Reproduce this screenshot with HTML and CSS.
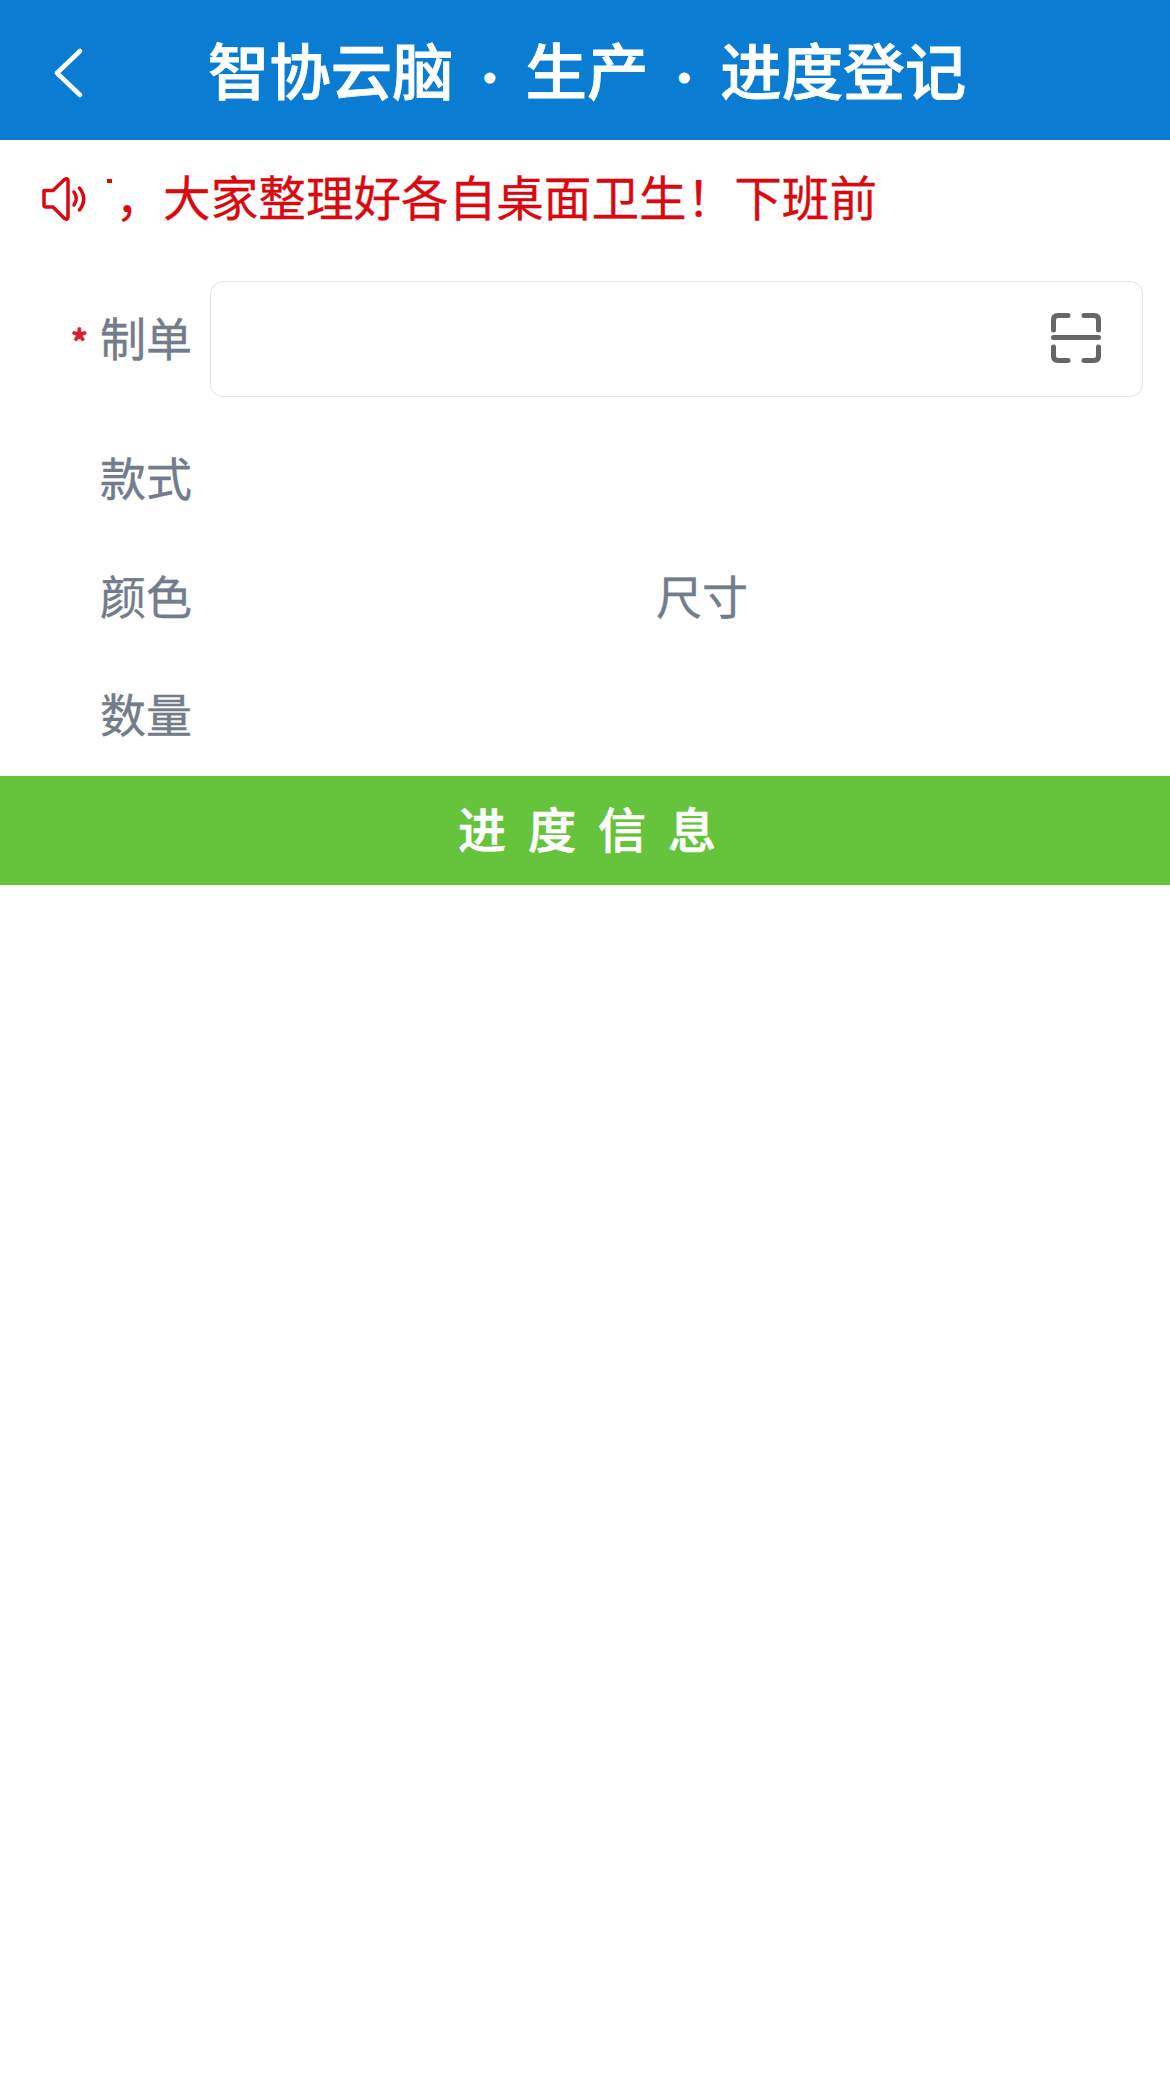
FILE: index.html
```html
<!DOCTYPE html>
<html lang="zh-CN">
<head>
<meta charset="utf-8">
<title>智协云脑 · 生产 · 进度登记</title>
<link rel="stylesheet" href="styles.css">
</head>
<body>
<header class="topbar">
  <a class="back" aria-label="返回">
    <svg class="back-icon" viewBox="0 0 30 50"><path d="M26 3 L3 25 L26 47"/></svg>
  </a>
  <h1 class="title">智协云脑 <span class="dot">·</span> 生产 <span class="dot">·</span> 进度登记</h1>
  <span class="topbar-side"></span>
</header>
<section class="notice">
  <svg class="notice-icon" viewBox="0 0 46 44">
    <path d="M3 13.5 H12 L23.5 2.5 Q27 0.5 27 4 V40 Q27 43.5 23.5 41.5 L12 30 H5 Q3 30 3 28 Z"/>
    <path d="M33 15 Q37.5 21.5 33 28"/>
    <path d="M38.5 11 Q47 22 38.5 33"/>
  </svg>
  <div class="notice-track">
    <i class="notice-cut"></i>
    <span class="notice-text">，大家整理好各自桌面卫生！下班前</span>
  </div>
</section>
<main class="form">
  <div class="row row-input">
    <label class="label"><span class="required">*</span>制单</label>
    <div class="input">
      <svg class="scan-icon" viewBox="0 0 50 50">
        <path d="M2.5 17 V7 Q2.5 2.5 7 2.5 H17"/>
        <path d="M33 2.5 H43 Q47.5 2.5 47.5 7 V17"/>
        <path d="M2.5 34 V43 Q2.5 47.5 7 47.5 H17"/>
        <path d="M33 47.5 H43 Q47.5 47.5 47.5 43 V34"/>
        <path d="M2.5 24.5 H47.5"/>
      </svg>
    </div>
  </div>
  <div class="row"><span class="label">款式</span></div>
  <div class="row row-split">
    <span class="label">颜色</span>
    <span class="label">尺寸</span>
  </div>
  <div class="row"><span class="label">数量</span></div>
</main>
<div class="section-bar">进度信息</div>
</body>
</html>
```
FILE: styles.css
```css
* { box-sizing: border-box; }
html, body { margin: 0; padding: 0; background: #fff; }
body {
  width: 1170px;
  height: 2080px;
  overflow: hidden;
  font-family: "Noto Sans CJK SC", "Noto Sans", sans-serif;
}
.topbar {
  height: 140px;
  background: #0a7dd3;
  display: grid;
  grid-template-columns: 1fr auto 1fr;
  align-items: center;
  color: #fff;
}
.back { display: flex; padding: 6px 0 0 54px; }
.back-icon {
  width: 30px;
  height: 50px;
  fill: none;
  stroke: #fff;
  stroke-width: 4.5;
  stroke-linecap: round;
  stroke-linejoin: round;
}
.title {
  margin: 0 0 0 4px;
  padding-bottom: 3px;
  font-size: 61.5px;
  line-height: 1;
  font-weight: 500;
  -webkit-text-stroke: 0.8px #fff;
  white-space: pre;
}
.dot {
  font-size: 44px;
  font-weight: 500;
}
.notice {
  height: 120px;
  display: flex;
  align-items: flex-start;
  padding: 26px 0 0 41px;
  color: #d9090f;
}
.notice-icon {
  width: 46px;
  height: 44px;
  flex: none;
  margin-top: 11px;
  fill: none;
  stroke: #d9090f;
  stroke-width: 3.5;
  stroke-linecap: round;
  stroke-linejoin: round;
}
.notice-track {
  display: flex;
  align-items: flex-start;
  margin-left: 20px;
}
.notice-cut {
  width: 5px;
  height: 4px;
  margin: 13px 3.5px 0 0;
  background: #d9090f;
}
.notice-text {
  font-size: 47.6px;
  line-height: 60px;
  white-space: nowrap;
  -webkit-text-stroke: 0.3px #d9090f;
}
.form { padding-top: 21px; }
.row {
  display: flex;
  align-items: center;
  height: 118px;
}
.row-input {
  height: 116px;
  margin-bottom: 23px;
}
.row-split {
  display: grid;
  grid-template-columns: 556px 1fr;
}
.label {
  width: 192px;
  padding-bottom: 6px;
  display: flex;
  justify-content: flex-end;
  align-items: center;
  flex: none;
  font-size: 46px;
  color: #737c8a;
  -webkit-text-stroke: 0.4px #737c8a;
}
.required {
  margin-right: 12px;
  padding-top: 8px;
  font-size: 34px;
  color: #d81e2c;
  -webkit-text-stroke: 0.6px #d81e2c;
  font-weight: 700;
}
.input {
  flex: none;
  width: 933px;
  height: 116px;
  margin-left: 18px;
  border: 1.5px solid #e2e2e4;
  border-radius: 13px;
  display: flex;
  align-items: center;
  justify-content: flex-end;
  padding: 0 41px 2px 0;
}
.scan-icon {
  width: 50px;
  height: 50px;
  fill: none;
  stroke: #666;
  stroke-width: 5;
  stroke-linecap: round;
}
.section-bar {
  margin-top: 2px;
  height: 109px;
  padding: 0 0 8px 26px;
  background: #66c33c;
  color: #fff;
  display: flex;
  align-items: center;
  justify-content: center;
  font-size: 48px;
  font-weight: 500;
  -webkit-text-stroke: 0.7px #fff;
  letter-spacing: 22px;
}
```
